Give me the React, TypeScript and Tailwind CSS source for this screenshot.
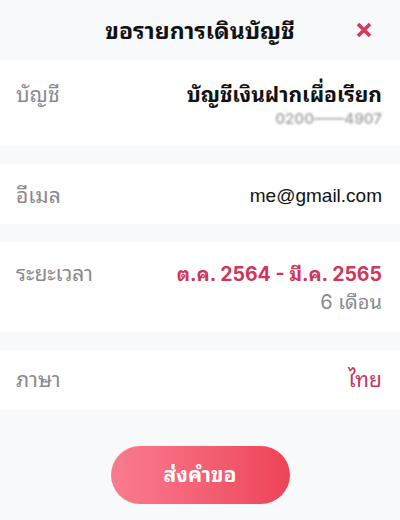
import React from 'react'

const FONT = "font-['Inter','Noto_Sans_Thai_Looped','Noto_Sans_Thai',sans-serif]"

function CloseIcon() {
  return (
    <svg width="18" height="18" viewBox="0 0 18 18" aria-hidden>
      <path d="M3 3 L15 15 M15 3 L3 15" stroke="#d9375a" strokeWidth="3.6" strokeLinecap="butt" />
    </svg>
  )
}

function Row({ label, children, className = '' }: { label: string; children: React.ReactNode; className?: string }) {
  return (
    <div className={`flex justify-between bg-white pl-4 pr-[18px] ${className}`}>
      <span className="text-[21px] leading-7 text-[#8a8a8e]">{label}</span>
      <div className="flex flex-col items-end">{children}</div>
    </div>
  )
}

export default function App() {
  return (
    <div className={`flex h-[520px] w-[400px] flex-col bg-[#f8f9fb] ${FONT}`}>
      <header className="relative flex h-[60px] items-center justify-center pt-[3px]">
        <h1 className="text-[23px] font-bold text-[#111]">ขอรายการเดินบัญชี</h1>
        <button type="button" aria-label="close" className="absolute right-[27px] top-[21px]">
          <CloseIcon />
        </button>
      </header>

      <Row label="บัญชี" className="h-[86px] pt-[21px]">
        <span className="text-[21px] font-bold leading-7 text-[#111]">บัญชีเงินฝากเผื่อเรียก</span>
        <span className="mt-[2px] select-none text-[15px] font-semibold leading-4 text-[#a8a8a8] blur-[1.2px]">0200——4907</span>
      </Row>

      <div className="h-[18px]" />

      <Row label="อีเมล" className="h-[60px] items-center pt-[3px]">
        <span className="font-['Liberation_Sans',sans-serif] text-[19px] leading-7 text-[#111]">me@gmail.com</span>
      </Row>

      <div className="h-[18px]" />

      <Row label="ระยะเวลา" className="h-[90px] pt-[18px]">
        <span className="text-[19.5px] font-bold leading-7 text-[#d0375b]">ต.ค. 2564 - มี.ค. 2565</span>
        <span className="text-[20px] leading-7 text-[#8a8a8e]">6 เดือน</span>
      </Row>

      <div className="h-[18px]" />

      <Row label="ภาษา" className="h-[60px] items-center">
        <span className="text-[21px] leading-7 text-[#c0395f]">ไทย</span>
      </Row>

      <div className="flex flex-1 items-start justify-center pt-9">
        <button
          type="button"
          className="h-[58px] w-[179px] rounded-full bg-gradient-to-r from-[#f97b90] to-[#ee4258] text-[21px] font-bold text-white"
        >
          ส่งคำขอ
        </button>
      </div>
    </div>
  )
}
